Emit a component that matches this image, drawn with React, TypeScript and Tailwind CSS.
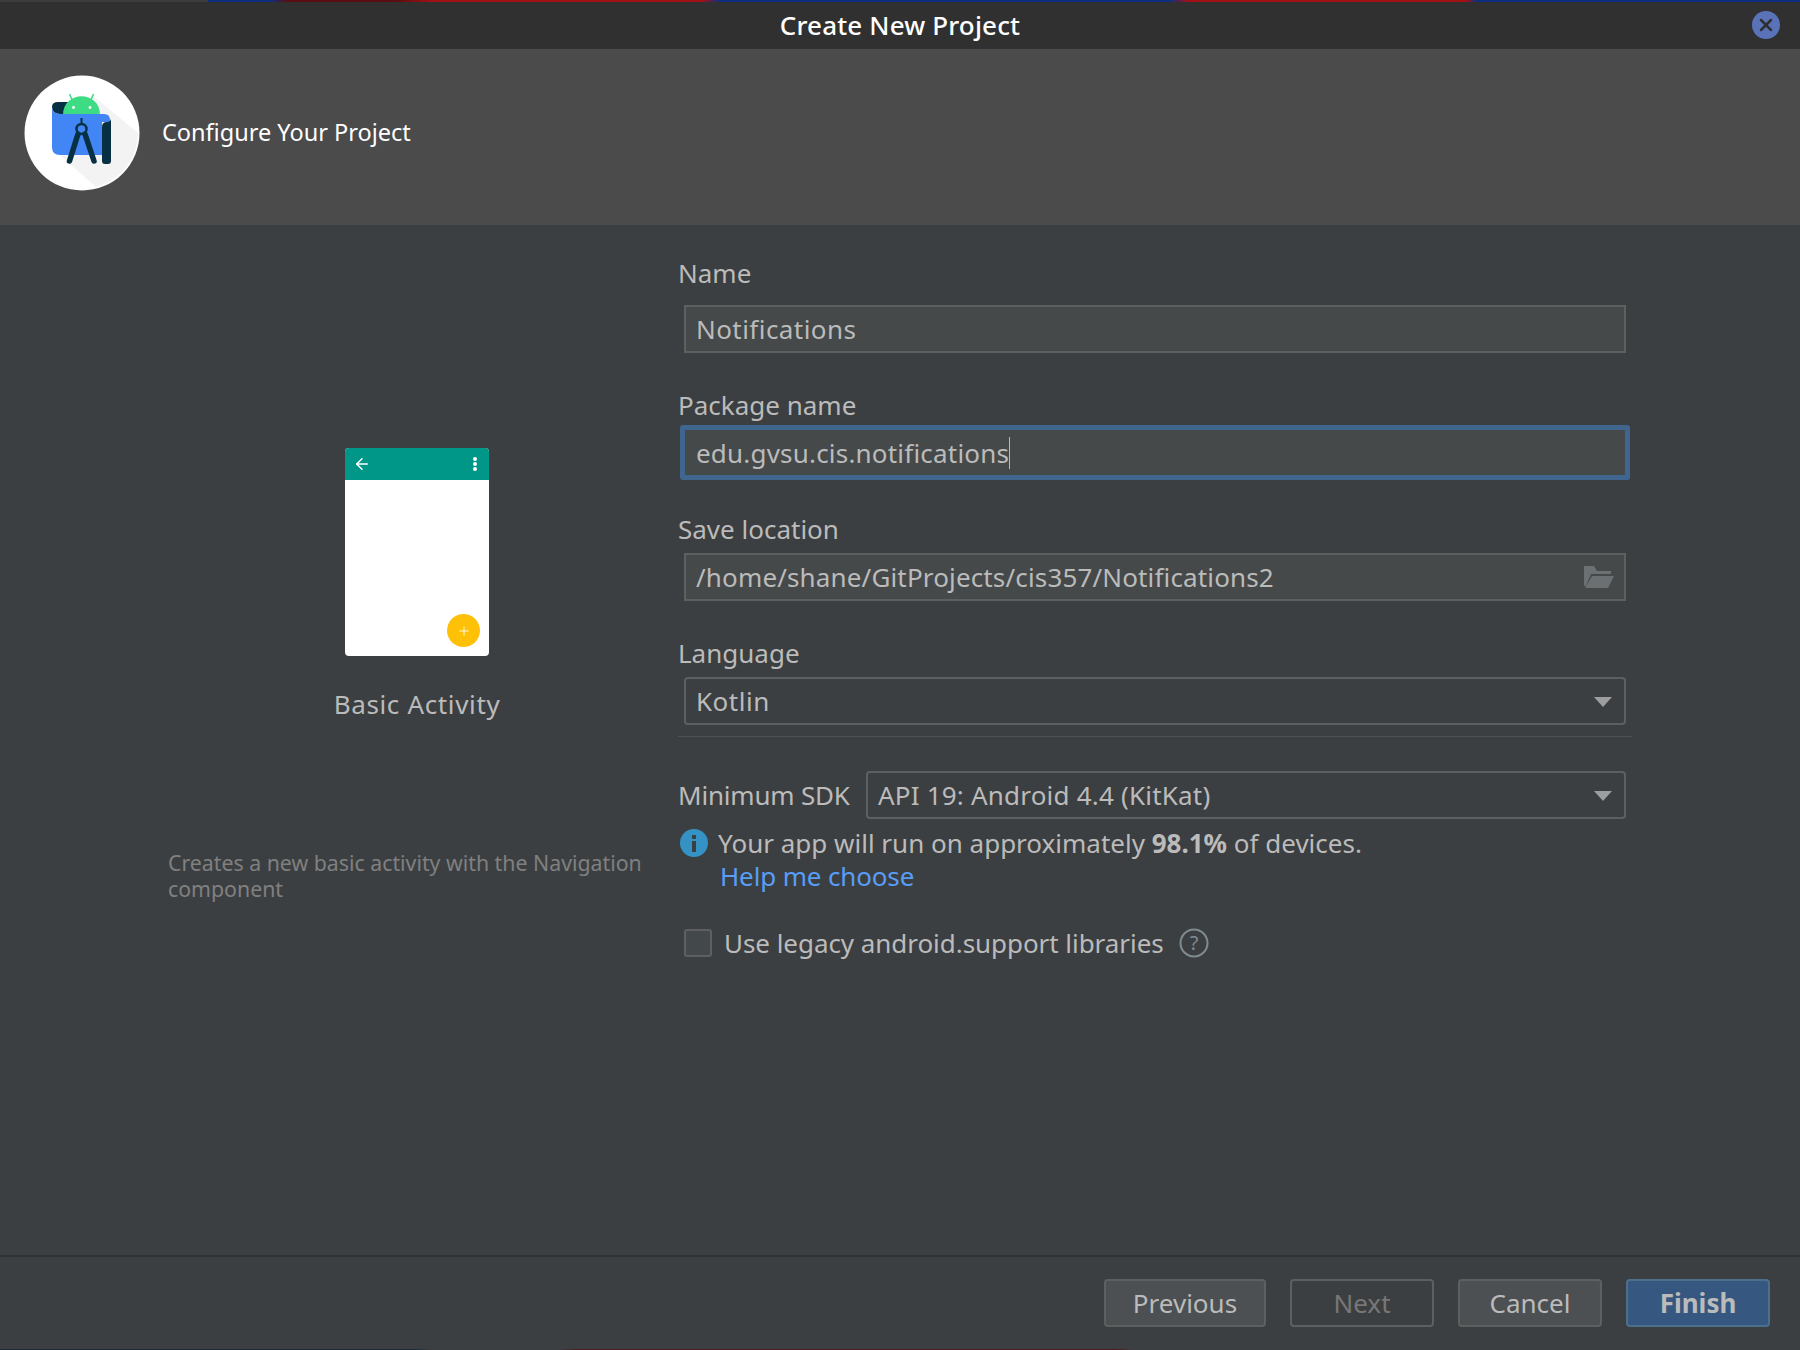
import { ArrowLeft, Plus, X } from "lucide-react";

const inputBox = "h-12 ml-[6px] mr-[6px] border-2 border-[#5e6060] bg-[#45494a] flex items-center px-[10px] text-[#bbbbbb]";
const comboBox = "h-12 border-2 border-[#5e6060] rounded-[4px] flex items-center justify-between pl-[10px] pr-[12px] text-[#bbbbbb]";

const Caret = () => (
  <svg width="18" height="10" viewBox="0 0 18 10" className="mt-[2px]">
    <path d="M0 0h18L9 10z" fill="#9c9e9f" />
  </svg>
);

const StudioLogo = () => (
  <svg width="116" height="116" viewBox="0 0 116 116">
    <circle cx="58" cy="58" r="57.5" fill="#ffffff" />
    <g transform="translate(0 -4)">
      <path d="M68 24 L114 62 A56 56 0 0 1 72 116 L36 84 Z" fill="#f3f3f3" />
      <path d="M28 36 q0 -5 6 -5 h10 v12 h-8 q-8 0 -8 -7z" fill="#073042" />
      <path d="M39 44 C39 19 76 19 76 44 z" fill="#3ddc84" />
      <path d="M49 31 l-3.5 -8 M66 31 l3.5 -8" stroke="#3ddc84" strokeWidth="1.5" />
      <circle cx="49.5" cy="36.5" r="1.4" fill="#ffffff" />
      <circle cx="66" cy="36.5" r="1.4" fill="#ffffff" />
      <path d="M28 36 q0 7 8 7 H80 q6 0 6 6 v2 H78 V84 H36 q-8 0 -8 -8 z" fill="#4285f4" />
      <path d="M78 56 q0 -5 5 -5 q4 0 4 -4 V90 q0 3 -3 3 h-3 q-3 0 -3 -3 z" fill="#073042" />
      <path d="M57.5 47 v7" stroke="#073042" strokeWidth="2" />
      <circle cx="57.5" cy="58" r="5" fill="#4285f4" stroke="#073042" strokeWidth="2.5" />
      <path d="M54 63 L45.5 90 M61 63 L70 90" stroke="#073042" strokeWidth="5.5" strokeLinecap="round" />
    </g>
  </svg>
);

const App = () => {
  return (
    <div className="w-[1800px] h-[1350px] flex flex-col bg-[#3c3f41] overflow-hidden text-[26px] leading-8 font-['Noto_Sans','Open_Sans',sans-serif]">
      <div className="h-[49px] shrink-0 flex flex-col bg-[#303030]">
        <div className="h-[2px] shrink-0 bg-[linear-gradient(90deg,#3c3c3c_0%,#3c3c3c_11.5%,#0e2f80_11.6%,#0e2f80_15%,#5a0d12_16%,#5a0d12_22%,#a01015_24%,#a01015_39%,#0e2f80_40%,#0e2f80_65%,#a01015_66%,#a01015_81.5%,#0e2f80_82%,#0e2f80_100%)]" />
        <div className="relative flex-1 flex items-center justify-center pb-[2px] text-white font-medium tracking-[0.15px]">
          Create New Project
          <div className="absolute right-[20px] top-[9px] w-7 h-7 rounded-full bg-[#5a72b8] flex items-center justify-center">
            <X size={20} strokeWidth={3} className="text-[#303030]" />
          </div>
        </div>
      </div>

      <div className="h-[176px] shrink-0 bg-[#4b4b4b] flex items-center pl-[24px] pb-[9px] gap-[22px] text-white text-[23.5px]">
        <StudioLogo />
        <span className="-mt-[2px]">Configure Your Project</span>
      </div>

      <div className="flex-1 flex">
        <div className="w-[678px] shrink-0 flex flex-col pl-[168px] pr-[10px]">
          <div className="ml-[177px] mt-[223px] w-[144px] h-[208px] rounded-[4px] bg-white relative overflow-hidden">
            <div className="h-8 bg-[#009688] flex items-center justify-between pl-[8px] pr-[12px]">
              <ArrowLeft size={18} strokeWidth={2} className="text-white" />
              <div className="flex flex-col gap-px">
                <span className="w-1 h-1 rounded-full bg-white" />
                <span className="w-1 h-1 rounded-full bg-white" />
                <span className="w-1 h-1 rounded-full bg-white" />
              </div>
            </div>
            <div className="absolute right-[9px] bottom-[9px] w-[33px] h-[33px] rounded-full bg-[#ffc107] flex items-center justify-center">
              <Plus size={14} strokeWidth={1.5} className="text-white" />
            </div>
          </div>
          <div className="mt-[32px] w-[498px] text-center text-[#bbbbbb] tracking-[0.65px]">Basic Activity</div>
          <div className="mt-[130px] text-[21.3px] leading-[26px] text-[#808080]">
            Creates a new basic activity with the Navigation component
          </div>
        </div>

        <div className="w-[954px] flex flex-col pt-[32px]">
          <div className="h-8 text-[#bbbbbb]">Name</div>
          <div className={`${inputBox} mt-[16px] tracking-[0.44px]`}>Notifications</div>

          <div className="h-8 mt-[36px] text-[#bbbbbb]">Package name</div>
          <div className="mt-[4px] h-[55px] mx-[2px] border-[5px] border-[#40668f] rounded-[3px] bg-[#45494a] flex items-center pl-[11px] text-[#bbbbbb] tracking-[0.2px]">
            <span>edu.gvsu.cis.notifications</span>
            <span className="w-px h-8 bg-[#bbbbbb]" />
          </div>

          <div className="h-8 mt-[33px] text-[#bbbbbb]">Save location</div>
          <div className={`${inputBox} mt-[8px] justify-between`}>
            <span className="tracking-[0.15px]">/home/shane/GitProjects/cis357/Notifications2</span>
            <svg width="30" height="22" viewBox="0 0 30 22">
              <path d="M0 0h10l3 5h14v3H7L2 20H0z" fill="#6b7073" />
              <path d="M8 10h22l-6 12H1z" fill="#6b7073" />
            </svg>
          </div>

          <div className="h-8 mt-[36px] text-[#bbbbbb]">Language</div>
          <div className={`${comboBox} mt-[8px] mx-[6px]`}>
            <span className="tracking-[0.5px]">Kotlin</span>
            <Caret />
          </div>
          <div className="h-px mt-[11px] bg-[#515151]" />

          <div className="flex items-center mt-[34px] text-[#bbbbbb]">
            <span className="w-[188px] shrink-0 tracking-[-0.2px]">Minimum SDK</span>
            <div className={`${comboBox} flex-1 mr-[6px]`}>
              <span className="tracking-[0.2px]">API 19: Android 4.4 (KitKat)</span>
              <Caret />
            </div>
          </div>

          <div className="flex items-center mt-[8px] h-8 text-[#bbbbbb]">
            <svg width="28" height="28" viewBox="0 0 28 28" className="shrink-0 ml-[2px] mr-[10px]">
              <circle cx="14" cy="14" r="14" fill="#3592c4" />
              <rect x="12" y="6" width="4" height="4" fill="#3c3f41" />
              <rect x="12" y="12" width="4" height="11" fill="#3c3f41" />
            </svg>
            <span>
              Your app will run on approximately <b className="font-bold">98.1%</b> of devices.
            </span>
          </div>
          <div className="h-8 mt-[1px] ml-[42px] text-[#589df6] tracking-[-0.15px]">Help me choose</div>

          <div className="flex items-center mt-[35px] ml-[6px] h-8 text-[#bbbbbb]">
            <div className="w-7 h-7 border-2 border-[#5e6060] rounded-[3px] bg-[#43494a] mr-[12px]" />
            <span className="tracking-[-0.05px]">Use legacy android.support libraries</span>
            <svg width="30" height="30" viewBox="0 0 30 30" className="ml-[15px]">
              <circle cx="15" cy="15" r="13.5" fill="none" stroke="#7f8b91" strokeWidth="2" />
              <text x="15" y="22" fontSize="20" fill="#7f8b91" textAnchor="middle" fontFamily="Noto Sans">?</text>
            </svg>
          </div>
        </div>
      </div>

      <div className="h-[94px] shrink-0 border-t-2 border-[#323232] flex items-start justify-end pt-[22px] pr-[30px] gap-[24px] text-[#bbbbbb]">
        <button className="w-[162px] h-12 rounded-[4px] border-2 border-[#5e6060] bg-[#4c5052]">Previous</button>
        <button className="w-[144px] h-12 rounded-[4px] border-2 border-[#5e6060] text-[#777777]">Next</button>
        <button className="w-[144px] h-12 rounded-[4px] border-2 border-[#5e6060] bg-[#4c5052]">Cancel</button>
        <button className="w-[144px] h-12 rounded-[4px] border-2 border-[#4c708c] bg-[#365880] font-bold">Finish</button>
      </div>
      <div className="h-px shrink-0 bg-[linear-gradient(90deg,#1c2a38_0%,#1c2a38_23%,#3c3f41_24%,#3c3f41_31%,#4a1a1c_32%,#4a1a1c_62%,#3c3f41_63%,#3c3f41_100%)]" />
    </div>
  );
};

export default App;
